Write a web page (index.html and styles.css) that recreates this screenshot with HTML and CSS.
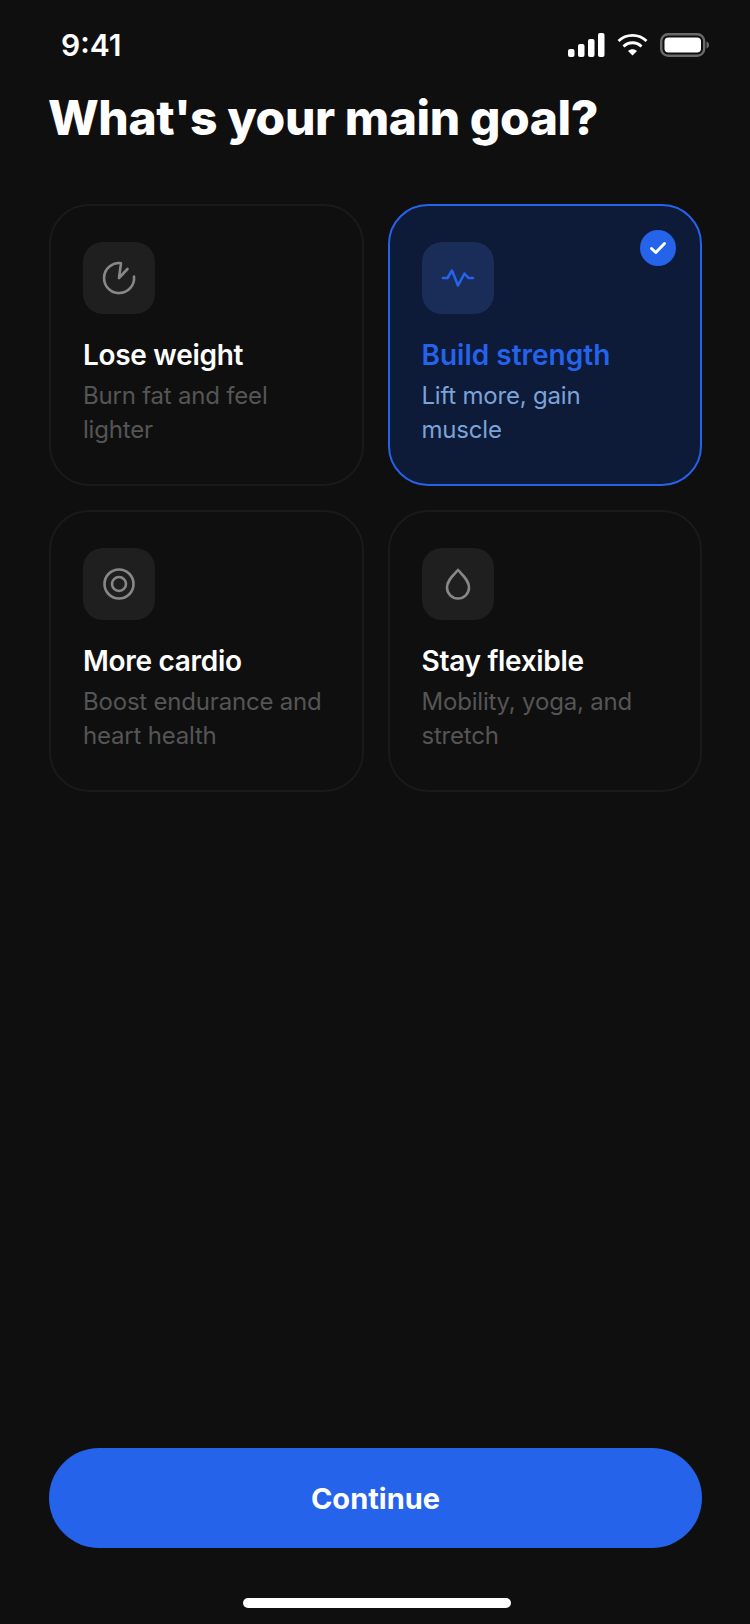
FILE: index.html
```html
<!DOCTYPE html>
<html>
    <head>
        <title>Main goal</title>
        <link rel="stylesheet" href="styles.css">
    </head>
    <body>
        <div class="screen">
            <div class="status-bar">
                <span class="time">9:41</span>
                <div class="status-icons">
                    <svg width="37" height="24" viewBox="0 0 37 24">
                        <rect x="0" y="16" width="6.500" height="8" rx="2" fill="#fff"/>
                        <rect x="10" y="11" width="6.500" height="13" rx="2" fill="#fff"/>
                        <rect x="20" y="6" width="6.500" height="18" rx="2" fill="#fff"/>
                        <rect x="30" y="0" width="6.500" height="24" rx="2" fill="#fff"/>
                    </svg>
                    <svg width="31" height="24" viewBox="0 0 31 24" fill="none" stroke="#fff" stroke-width="2.800">
                        <path d="M1.500 8C9 0.500 22 0.500 29.500 8"/>
                        <path d="M6.500 13.500C11.500 8.500 19.500 8.500 24.500 13.500"/>
                        <path d="M15.500 22.500L11 18C13.500 15.500 17.500 15.500 20 18Z" fill="#fff" stroke="none"/>
                    </svg>
                    <svg width="49" height="24" viewBox="0 0 49 24" fill="none">
                        <rect x="1.200" y="1.200" width="43" height="21.600" rx="7" stroke="#6a6a6a" stroke-width="2.400"/>
                        <rect x="4.500" y="4.500" width="36.500" height="15" rx="4" fill="#fff"/>
                        <path d="M46.500 8.500C48 9 49 10.300 49 12C49 13.700 48 15 46.500 15.500Z" fill="#6a6a6a"/>
                    </svg>
                </div>
            </div>

            <h1 class="heading">What's your main goal?</h1>

            <div class="goals">
                <div class="goal">
                    <div class="goal-icon">
                        <svg width="36" height="36" viewBox="0 0 36 36" fill="none" stroke="#888" stroke-width="2.600" stroke-linecap="round" stroke-linejoin="round">
                            <path d="M26.500 9L18 18L20 3.200A15 15 0 1 0 33 16.500"/>
                        </svg>
                    </div>
                    <div class="goal-title">Lose weight</div>
                    <div class="goal-desc">Burn fat and feel lighter</div>
                </div>
                <div class="goal goal-selected">
                    <div class="goal-check">
                        <svg width="18" height="14" viewBox="0 0 18 14" fill="none" stroke="#fff" stroke-width="3" stroke-linecap="round" stroke-linejoin="round">
                            <path d="M2.500 7.500L6.800 11.500L15.500 2.500"/>
                        </svg>
                    </div>
                    <div class="goal-icon">
                        <svg width="36" height="36" viewBox="0 0 36 36" fill="none" stroke="#2563eb" stroke-width="2.600" stroke-linecap="round" stroke-linejoin="round">
                            <path d="M3 18H7.500L12 10.500L18 25.500L24.500 13.500L28.500 18H33"/>
                        </svg>
                    </div>
                    <div class="goal-title">Build strength</div>
                    <div class="goal-desc">Lift more, gain muscle</div>
                </div>
                <div class="goal">
                    <div class="goal-icon">
                        <svg width="36" height="36" viewBox="0 0 36 36" fill="none" stroke="#888" stroke-width="2.600">
                            <circle cx="18" cy="18" r="14.500"/>
                            <circle cx="18" cy="18" r="7"/>
                        </svg>
                    </div>
                    <div class="goal-title">More cardio</div>
                    <div class="goal-desc">Boost endurance and heart health</div>
                </div>
                <div class="goal">
                    <div class="goal-icon">
                        <svg width="36" height="36" viewBox="0 0 36 36" fill="none" stroke="#888" stroke-width="2.600" stroke-linejoin="round">
                            <path d="M18 4C23 9.500 29 14.500 29 21.500C29 27.800 24 32.500 18 32.500C12 32.500 7 27.800 7 21.500C7 14.500 13 9.500 18 4Z"/>
                        </svg>
                    </div>
                    <div class="goal-title">Stay flexible</div>
                    <div class="goal-desc">Mobility, yoga, and stretch</div>
                </div>
            </div>

            <div class="footer">
                <button class="continue">Continue</button>
                <div class="home-bar"></div>
            </div>
        </div>
    </body>
</html>
```

FILE: styles.css
```css
* {
    box-sizing: border-box;
}

body {
    margin: 0;
    background: #0f0f0f;
    font-family: "Inter", "Liberation Sans", sans-serif;
    color: #fff;
}

.screen {
    height: 1624px;
    padding: 0 48px 0 49px;
    display: flex;
    flex-direction: column;
}

.status-bar {
    height: 56px;
    margin-top: 28px;
    padding-left: 12px;
    display: flex;
    justify-content: space-between;
    align-items: flex-start;
}

.time {
    font-size: 30px;
    font-weight: 600;
    line-height: 34px;
}

.status-icons {
    display: flex;
    gap: 12px;
    margin-top: 5px;
    margin-right: -7px;
}

.heading {
    margin: 6px 0 0 -1px;
    font-size: 48px;
    font-weight: 800;
    line-height: 56px;
    letter-spacing: -0.45px;
}

.goals {
    margin-top: 58px;
    display: grid;
    grid-template-columns: 1fr 1fr;
    gap: 24px;
}

.goal {
    height: 282px;
    padding: 36px 38px 0 32px;
    border: 2px solid #1a1a1a;
    border-radius: 40px;
    position: relative;
}

.goal-selected {
    background: #0d1a38;
    border-color: #2563eb;
}

.goal-icon {
    width: 72px;
    height: 72px;
    border-radius: 20px;
    background: #1f1f1f;
    display: flex;
    align-items: center;
    justify-content: center;
    margin-bottom: 24px;
}

.goal-selected .goal-icon {
    background: #1a2c58;
}

.goal-check {
    position: absolute;
    top: 24px;
    right: 24px;
    width: 36px;
    height: 36px;
    border-radius: 50%;
    background: #2563eb;
    display: flex;
    align-items: center;
    justify-content: center;
}

.goal-title {
    font-size: 28px;
    font-weight: 600;
    line-height: 34px;
    letter-spacing: -0.3px;
    margin-bottom: 7px;
}

.goal-selected .goal-title {
    color: #2563eb;
    letter-spacing: 0;
}

.goal-desc {
    font-size: 24px;
    line-height: 34px;
    letter-spacing: -0.2px;
    color: #555;
}

.goal-selected .goal-desc {
    color: #7ca3d8;
}

.footer {
    margin-top: auto;
    display: flex;
    flex-direction: column;
    align-items: center;
}

.continue {
    width: 100%;
    height: 100px;
    border: none;
    border-radius: 50px;
    background: #2563eb;
    color: #fff;
    font-family: "Inter", "Liberation Sans", sans-serif;
    font-size: 29px;
    font-weight: 700;
}

.home-bar {
    width: 268px;
    height: 10px;
    margin: 50px 0 16px 3px;
    border-radius: 5px;
    background: #fff;
}
```
